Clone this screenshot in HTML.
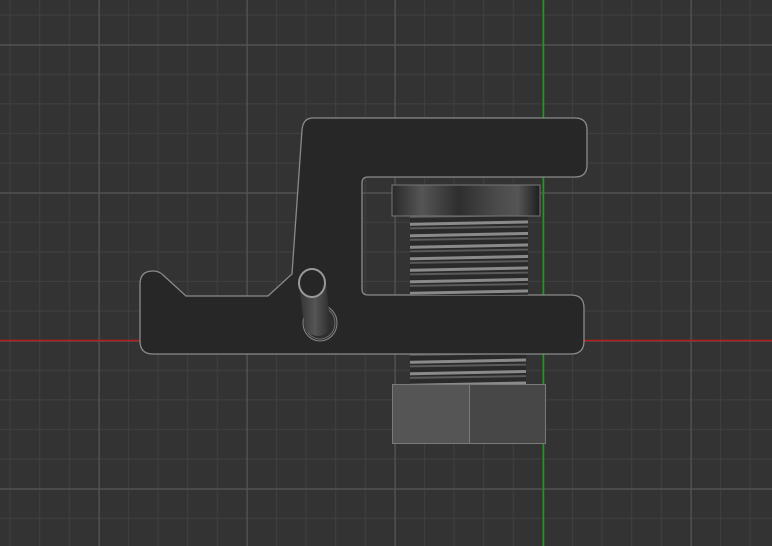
<!DOCTYPE html>
<html><head><style>html,body{margin:0;padding:0;background:#333;overflow:hidden}svg{display:block}</style></head>
<body>
<svg width="772" height="546" viewBox="0 0 772 546" xmlns="http://www.w3.org/2000/svg">
<defs>
<pattern id="minor" x="9.5" y="14.5" width="29.6" height="29.6" patternUnits="userSpaceOnUse">
<path d="M0.5 0V29.6M0 0.5H29.6" stroke="#3f3f3f" stroke-width="1.2" fill="none"/>
</pattern>
<pattern id="major" x="98.5" y="44.5" width="148" height="148" patternUnits="userSpaceOnUse">
<path d="M0.5 0V148M0 0.5H148" stroke="#555" stroke-width="1.4" fill="none"/>
</pattern>
<linearGradient id="head" x1="0" x2="1">
<stop offset="0" stop-color="#2a2a2a"/><stop offset="0.2" stop-color="#555"/><stop offset="0.45" stop-color="#2e2e2e"/><stop offset="0.7" stop-color="#4a4a4a"/><stop offset="0.85" stop-color="#555"/><stop offset="1" stop-color="#1e1e1e"/>
</linearGradient>
<linearGradient id="pin" x1="0" x2="1">
<stop offset="0" stop-color="#333"/><stop offset="0.5" stop-color="#555"/><stop offset="1" stop-color="#2a2a2a"/>
</linearGradient>
<pattern id="thread" x="0" y="0" width="200" height="11.5" patternUnits="userSpaceOnUse">
<rect width="200" height="11.5" fill="#2a2a2a"/>
<path d="M0 6 L200 2" stroke="#8a8a8a" stroke-width="3"/>
<path d="M0 10 L200 7" stroke="#5a5a5a" stroke-width="2"/>
</pattern>
</defs>
<rect width="772" height="546" fill="#333"/>
<rect width="772" height="546" fill="url(#minor)"/>
<rect width="772" height="546" fill="url(#major)"/>
<line x1="0" y1="340.5" x2="772" y2="340.5" stroke="#b01e1e" stroke-width="1.5"/>
<line x1="543.5" y1="0" x2="543.5" y2="546" stroke="#1f9a1f" stroke-width="1.5"/>

<rect x="410" y="350" width="116" height="36" fill="url(#thread)"/>
<path d="M313 118 H575 Q587 118 587 130 V165 Q587 177 575 177 H368 Q362 177 362 183 V289 Q362 295 368 295 H571 Q584 295 584 308 V341 Q584 354 571 354 H153 Q140 354 140 341 V284 Q140 271 153 271 Q159 271 163 275 L186 296 H268 L292 274 L302 130 Q303 118 313 118 Z" fill="#272727" stroke="#8a8a8a" stroke-width="1.3"/>
<rect x="410" y="215" width="118" height="80" fill="url(#thread)"/>
<rect x="392" y="185" width="148" height="31" fill="url(#head)" stroke="#777" stroke-width="1"/>
<rect x="392.5" y="384.5" width="77" height="59" fill="#555" stroke="#7a7a7a"/>
<rect x="469.5" y="384.5" width="76" height="59" fill="#474747" stroke="#7a7a7a"/>
<ellipse cx="320" cy="323" rx="17" ry="18" fill="#2e2e2e" stroke="#888" stroke-width="1"/>
<ellipse cx="320" cy="323" rx="15" ry="16" fill="none" stroke="#777" stroke-width="0.8"/>
<path d="M299 285 L305 330 Q318 342 331 330 L326 283 Z" fill="url(#pin)"/>
<ellipse cx="312" cy="283" rx="13" ry="14" fill="#262626" stroke="#999" stroke-width="2"/>
</svg>
</body></html>
